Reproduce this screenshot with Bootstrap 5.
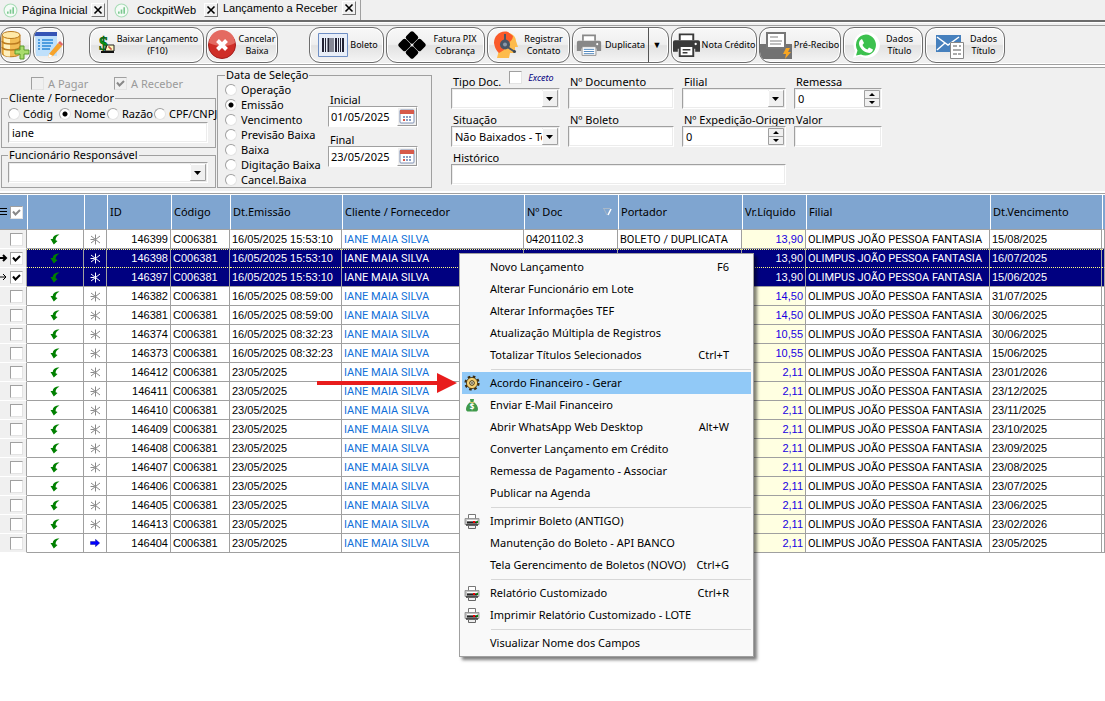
<!DOCTYPE html>
<html lang="pt-BR">
<head>
<meta charset="utf-8">
<meta name="viewport" content="width=device-width, initial-scale=1">
<title>Lançamento a Receber</title>
<link href="https://cdn.jsdelivr.net/npm/bootstrap@5.3.0/dist/css/bootstrap.min.css" rel="stylesheet">
<style>
:root{--ui:"Noto Sans","Open Sans",sans-serif;--doc:"Liberation Sans",Arial,sans-serif;--face:#f0f0f0;--edge:#a0a0a0}
body{font:11px/14px var(--ui);color:#000;background:#fff;min-height:100vh;overflow:hidden}
svg{display:block;flex:none}
/* tabs */
.tabs{height:20px;background:var(--face);font:11px/14px var(--doc)}
.tab-item{height:20px;border-right:1px solid var(--edge);padding:0 2px 0 3px}
.tab-item a{color:#000;text-decoration:none;white-space:nowrap}
.tab-item.first{width:108px}.tab-item.second{width:110px;padding:0 3px 0 6px;border-right-color:#fff}
.tab-item.current{width:143px;padding:0 4px 4px 5px}
.shut{width:14px;height:14px;padding:0;background:var(--face);border:1px solid;border-color:#fff #777 #777 #fff}
/* toolbar */
.tools{background:var(--face);border-top:2px solid #6c6c6c;padding:3px 0;box-shadow:inset 0 1px #fff}
.tools-in{border-top:1px solid var(--edge);border-bottom:1px solid #fff;padding:1px 0 0;gap:2px}
.tool{height:36px;padding:0 3px;border:1px solid #6d6d6d;border-radius:11px;font:9px/12px var(--ui);color:#000;background:linear-gradient(#f8f8f8,#efefef 48%,#e2e2e2 52%,#f4f4f4);box-shadow:inset 0 0 0 1px #fff;overflow:hidden;flex:none}
.tool span{flex:1;text-align:center}
.w31{width:31px}.w72{width:72px}.w75{width:75px}.w80{width:80px}.w82{width:82px}.w83{width:83px}.w86{width:86px}.w97{width:97px}.w99{width:99px}.w115{width:115px}
.gap-a{margin-left:23px}.gap-b{margin-left:29px}
.tool .drop{align-self:stretch;border-left:1px solid #555;flex:none;width:20px;line-height:34px;padding-right:3px}
/* filters */
.filters{background:var(--face);border-top:1px solid var(--edge);border-bottom:1px solid #fff;height:125px;box-shadow:0 -2px #fff,0 -3px var(--edge)}
.frame{border:1px solid var(--edge);margin:0;padding:0}
.frame legend{float:none;width:auto;font:11px/14px var(--ui);margin:0 0 0 7px;padding:0 1px}
.side{width:216px;padding-left:1px}.side .frame{padding:0 7px 0 6px}
.field,.combo,.spin{height:21px;width:100%;border:1px solid;border-color:var(--edge) #fff #fff var(--edge);border-radius:0;background-color:#fff;font:11px/14px var(--ui);color:#000;padding:0 3px;outline:0;box-shadow:inset 0 0 0 1px #ececec;appearance:none;-moz-appearance:textfield}
.spin::-webkit-inner-spin-button{display:none}
.combo{padding-right:17px;background:#fff url("data:image/svg+xml,%3Csvg xmlns='http://www.w3.org/2000/svg' width='16' height='17'%3E%3Cpath fill='%23f0f0f0' stroke='%23a0a0a0' d='M.5.5h15v16H.5z'/%3E%3Cpath stroke='%23fff' fill='none' d='M.5 16V.5H15'/%3E%3Cpath d='M4 7h7L7.500 11z'/%3E%3C/svg%3E") right 1px center no-repeat}
.spin{background:#fff url("data:image/svg+xml,%3Csvg xmlns='http://www.w3.org/2000/svg' width='16' height='17'%3E%3Cpath fill='%23f0f0f0' stroke='%23a0a0a0' d='M.5.500h15v16H.5z'/%3E%3Cpath stroke='%23a0a0a0' d='M0 8.500h16'/%3E%3Cpath d='M5 6h6L8 3zM5 11h6l-3 3z'/%3E%3C/svg%3E") right 1px center no-repeat}
.tick{appearance:none;width:13px;height:13px;margin:0;flex:none;background:#fff;border:1px solid;border-color:var(--edge) #e3e3e3 #e3e3e3 var(--edge)}
.tick:checked{background:#fff url("data:image/svg+xml,%3Csvg xmlns='http://www.w3.org/2000/svg' width='11' height='11'%3E%3Cpath fill='none' stroke='%23000' stroke-width='2' d='M2 4.500l2.500 3L9 3'/%3E%3C/svg%3E") center no-repeat}
.tick.dim,.tick.dim:checked{background-color:var(--face)}
.tick.pale:checked{background-image:url("data:image/svg+xml,%3Csvg xmlns='http://www.w3.org/2000/svg' width='11' height='11'%3E%3Cpath fill='none' stroke='%23888' stroke-width='2' d='M2 4.500l2.500 3L9 3'/%3E%3C/svg%3E")}
.dot{appearance:none;width:12px;height:12px;margin:0;flex:none;border-radius:50%;background:#fff;border:1px solid;border-color:var(--edge) #e3e3e3 #e3e3e3 var(--edge)}
.dot:checked{background:radial-gradient(circle,#000 2px,#fff 3px)}
.pick{height:15px;display:flex;align-items:center;gap:4px;white-space:nowrap}
.status-row{padding:8px 0 0 30px;height:23px;color:#9a9a9a}
.status-row label:first-child{width:83px}
.by{display:grid;grid-template-columns:51px 48px 47px 1fr;height:17px;margin-right:-7px}
.by .pick{height:17px;gap:3px}
.dates{width:215px;height:120px;margin:0 18px 0 1px!important}
.kinds{width:102px;padding-left:7px}
.range{width:90px;padding-top:11px}
.range label,.crit label{display:block;height:13px;line-height:13px;white-space:nowrap;padding-left:2px}
.withcal{display:flex;height:21px;margin-bottom:6px;background:#fff;border:1px solid;border-color:var(--edge) #fff #fff var(--edge)}
.withcal input{flex:1;min-width:0;border:0;outline:0;padding:0 2px;font:11px/14px var(--ui)}
.withcal button{width:20px;padding:1px;background:var(--face);border:1px solid;border-color:#fff #999 #999 #fff}
.crit{display:grid;grid-template-columns:109px 106px 104px 88px;column-gap:8px;row-gap:4px;grid-auto-rows:34px;padding:7px 0 0 1px}
.crit .wide{grid-column:span 3}
.crit .opt{font-size:9px;font-style:italic;color:#000080}
.kind-head{height:13px}.kind-head label:not(:first-child),.kind-head input{margin-bottom:4px}
/* grid */
.sheet{border-top:1px solid var(--edge);padding-top:1px;margin-top:1px;flex:1}
.ledger{table-layout:fixed;width:100%;border-collapse:separate;border-spacing:0;font:11px/14px var(--doc);margin:0}
.ledger th{height:35px;background:#7fa5d0;border-left:1px solid #fff;border-bottom:1px solid var(--edge);font:11px/14px var(--ui);padding:0 2px;white-space:nowrap}
.ledger th:first-child{border-left:0;padding:0}
.ledger td{height:19px;padding:0 2px;border-right:1px solid var(--edge);border-bottom:1px solid var(--edge);white-space:nowrap;overflow:hidden}
.ledger td:first-child{background:var(--face);padding:0;border-bottom-color:#fff}
.ledger td.nm{font-family:Roboto,sans-serif;padding-top:2px}
.ledger .who{color:#1070d8}
.ledger .cash{background:#ffffe1;color:#1800e0;text-align:right}
.ledger .picked td:not(:first-child){background-color:#000080;color:#fff}
.ledger .cursor td:not(:first-child){border-bottom:1px dotted #ffff80;background-image:repeating-linear-gradient(90deg,#ffff80 0 1px,transparent 1px 2px);background-size:100% 1px;background-repeat:no-repeat}
.ledger td svg{margin:0 auto}
.lead-cell{display:flex;align-items:center;height:18px}
.lead-cell i{width:10px}
.lead-cell i svg{margin:0}
/* context menu */
.ctx{left:459px;top:59px;width:295px;min-width:0;padding:2px;border:1px solid #a0a0a0;border-radius:0;background:#f9f9f9;box-shadow:3px 3px 3px rgba(0,0,0,.5);font:11px/14px var(--ui);z-index:5}
.ctx .dropdown-item{height:22px;padding:0 22px 0 2px;color:#000;display:flex;align-items:center}
.ctx .dropdown-item.active{background:#91c9f7}
.ctx .ico{width:26px;flex:none}
.ctx .dropdown-divider{margin:3px 0 2px 29px;border-color:#d7d7d7;opacity:1}
.pointer{left:317px;top:179px;z-index:6}
</style>
</head>
<body class="d-flex flex-column">
<svg width="0" height="0" class="position-absolute" aria-hidden="true">
<symbol id="logo" viewBox="0 0 14 14"><circle cx="7" cy="7" r="6" fill="#f4fbf6" stroke="#a8dcb6"/><path d="M4.500 10V8M7 10V6M9.500 10V4" stroke="#7cc890" stroke-width="1.500"/></symbol>
<symbol id="x" viewBox="0 0 12 12"><path d="M2.500 2.500l7 7M9.500 2.500l-7 7" stroke="#000" stroke-width="1.600"/></symbol>
<symbol id="hook" viewBox="0 0 10 11"><path d="M9.500.5C5 .5 2.800 2.500 2.800 5H.5L3.800 10.500 7.500 7 5.600 6.200C5.600 4 6.500 2 9.500.5z" fill="#008000"/></symbol>
<symbol id="star" viewBox="0 0 11 11"><path d="M5.500.5v10M1 2l9 7M10 2L1 9M.5 5.500h4" stroke="currentColor" fill="none"/></symbol>
<symbol id="go" viewBox="0 0 10 8"><path d="M.5 2.500h5V.3L9.700 4 5.500 7.700V5.500h-5z" fill="#00f" stroke="#007" stroke-width=".4"/></symbol>
<symbol id="cal" viewBox="0 0 16 15"><rect x="1" y="1" width="14" height="13" rx="1" fill="#fff" stroke="#7e91b5"/><path d="M1 1h14v4H1z" fill="#d75a4a"/><path d="M4 8h2M7 8h2M10 8h2M7 11h2M10 11h2" stroke="#8a9fc4" stroke-width="2"/><path d="M4 11h2" stroke="#d9574a" stroke-width="2"/></symbol>
<symbol id="prn" viewBox="0 0 16 15"><path d="M4.500.5h7v5h-7z" fill="#fff" stroke="#777"/><path d="M1 4.500h14v6H1z" fill="#c4c4c4" stroke="#888" stroke-width=".8"/><path d="M3 6.500h10" stroke="#fff"/><path d="M3 8.500h10" stroke="#222" stroke-width="2"/><path d="M9 8h2" stroke="#e00" stroke-width="2"/><path d="M12.500 8H14" stroke="#080" stroke-width="2"/><path d="M2 11h12" stroke="#333" stroke-width="1.500"/><path d="M4.500 11.500h7v3h-7z" fill="#eee" stroke="#666"/></symbol>
<symbol id="big-prn" viewBox="0 0 30 26"><path d="M8 8V2h14v6" fill="#fff" stroke="currentColor" stroke-width="2"/><path d="M3 8h24a2 2 0 0 1 2 2v10h-5v-3H6v3H1V10a2 2 0 0 1 2-2z" fill="currentColor"/><circle cx="24.500" cy="12" r="1.200" fill="#fff"/></symbol>
</svg>

<nav class="tabs d-flex" aria-label="Abas">
 <div class="tab-item first d-flex align-items-center gap-1"><svg width="15" height="15"><use href="#logo"/></svg><a href="#">Página Inicial</a><button class="shut ms-auto" aria-label="Fechar"><svg width="12" height="12"><use href="#x"/></svg></button></div>
 <div class="tab-item second d-flex align-items-center gap-2"><svg width="15" height="15"><use href="#logo"/></svg><a href="#">CockpitWeb</a><button class="shut ms-auto" aria-label="Fechar"><svg width="12" height="12"><use href="#x"/></svg></button></div>
 <div class="tab-item current d-flex align-items-center"><a href="#">Lançamento a Receber</a><button class="shut ms-auto" aria-label="Fechar"><svg width="12" height="12"><use href="#x"/></svg></button></div>
</nav>

<div class="tools"><div class="tools-in d-flex">
 <button class="tool w31 p-0 d-flex align-items-center" aria-label="Incluir"><svg width="29" height="30" viewBox="0 0 29 30"><path d="M1 5v18c0 5 18 5 18 0V5" fill="#f2bd55" stroke="#ba7b20"/><path d="M3 8v17c3 2 6 1.500 6 1.500V9z" fill="#fff0bd"/><ellipse cx="10" cy="5" rx="9" ry="3.500" fill="#ffe9a8" stroke="#ba7b20"/><path d="M1 11c1 4 17 4 18 0M1 17c1 4 17 4 18 0" fill="none" stroke="#ba7b20" stroke-width="1.500"/><path d="M19 16h4v4h5v4h-5v5h-4v-5h-5v-4h5z" fill="#a9dc6c" stroke="#5b9b2c"/></svg></button>
 <button class="tool w31 p-0 d-flex align-items-center" aria-label="Editar"><svg width="29" height="30" viewBox="0 0 29 30"><path d="M1 2h22v24H2z" fill="#bfe0fb"/><path d="M0 2h23v4H0z" fill="#3554b5"/><path d="M4 10h2M4 13h2M4 16h2M4 19h2M8 10h11M8 13h11M8 16h9M8 19h8" stroke="#2b86d6" stroke-width="1.500"/><path d="M15 24L24 13l4 3-9 10-5 2z" fill="#f6a32c"/><path d="M24 13l2-2 3 3-1 2z" fill="#e06666"/><path d="M15 24l-1 4 5-2z" fill="#fff"/></svg></button>
 <button class="tool w115 gap-a d-flex align-items-center ps-2"><svg width="17" height="22" viewBox="0 0 17 22"><text x="1" y="16" font-family="Liberation Serif" font-weight="bold" font-size="18" fill="#069a16" stroke="#044c08" stroke-width=".6">$</text><path d="M9 11h7v6H7z" fill="#fff8bd" stroke="#222"/><path d="M10 13h2v2h2" stroke="#b02020" fill="none"/><path d="M3 18h13" stroke="#111" stroke-width="2"/></svg><span>Baixar Lançamento<br>(F10)</span></button>
 <button class="tool w72 ps-0 pe-0 d-flex align-items-center"><svg width="30" height="30" viewBox="0 0 30 30"><circle cx="15" cy="15" r="13.500" fill="#cf2e27" stroke="#a21d1b"/><path d="M2 13a13 13 0 0 1 26 0c-6 4-18 4-26 0z" fill="#e46a61"/><path d="M10.500 10.500l9 9M19.500 10.500l-9 9" stroke="#fff" stroke-width="4"/></svg><span>Cancelar<br>Baixa</span></button>
 <button class="tool w75 gap-b d-flex align-items-center ps-2"><svg width="30" height="24" viewBox="0 0 30 24"><path d="M.5.5h29v23H.5z" fill="#e8eef8" stroke="#6f8fc4"/><path d="M5 5v14M10.500 5v14M18 5v14M25 5v14" stroke="#223" stroke-width="2"/><path d="M7.500 5v14M13 5v14M15 5v14M20.500 5v14M22.500 5v14" stroke="#223"/></svg><span>Boleto</span></button>
 <button class="tool w99 d-flex align-items-center ps-2"><svg width="34" height="30" viewBox="0 0 34 30"><g transform="translate(17 15) rotate(45)"><rect x="-10.300" y="-10.300" width="10" height="10" rx="2"/><rect x=".3" y="-10.300" width="10" height="10" rx="2"/><rect x="-10.300" y=".3" width="10" height="10" rx="2"/><rect x=".3" y=".3" width="10" height="10" rx="2"/></g></svg><span>Fatura PIX<br>Cobrança</span></button>
 <button class="tool w83 d-flex align-items-center"><svg width="30" height="28" viewBox="0 0 30 28"><path d="M12 1c9 0 13 5 13 9l2 6h-3v6h-5l-1 5H6l3-12z" fill="#fdbb4b"/><path d="M17 1C9-1 3 5 3 12c1 6 3 8 5 10l5-3c0-5 9-8 9-14z" fill="#fa5a2a"/><path d="M14 3v10M15 15l9 6" stroke="#4a5665" stroke-width="2" fill="none"/><circle cx="14" cy="13.500" r="5" fill="#4a5665"/><circle cx="14" cy="13.500" r="2" fill="#8a98a8"/><circle cx="23.500" cy="20.500" r="1.500" fill="#394450"/></svg><span>Registrar<br>Contato</span></button>
 <button class="tool w97 pe-0 d-flex align-items-center"><svg width="26" height="26" viewBox="0 0 30 26" color="#888"><use href="#big-prn" width="30" height="26"/><path d="M7 15h16v10H7z" fill="#fff" stroke="#888"/><path d="M9 18h12M9 20.500h12M9 23h12" stroke="#3a78b5"/></svg><span>Duplicata</span><span class="drop">▼</span></button>
 <button class="tool w86 ps-0 pe-0 d-flex align-items-center"><svg width="29" height="26" viewBox="0 0 30 26" color="#3a3a3a"><use href="#big-prn" width="30" height="26"/><path d="M8 14h14v10.500H8z" fill="#fff" stroke="#3a3a3a" stroke-width="2"/><path d="M11 18h8M11 21h5" stroke="#3a3a3a" stroke-width="1.500"/></svg><span>Nota Crédito</span></button>
 <button class="tool w82 ps-0 pe-0 d-flex align-items-center"><svg width="33" height="29" viewBox="0 0 33 29"><path d="M0 13h32v15H0z" fill="#727272"/><path d="M7 2h18v15H7z" fill="#fff" stroke="#777" stroke-width="2"/><path d="M10 6h8M10 10h12M10 13h11" stroke="#aaa" stroke-width="1.500"/><path d="M26 17h4l-2 4h3l-6 7 1-5h-3z" fill="#f7a521"/></svg><span>Pré-Recibo</span></button>
 <button class="tool w80 d-flex align-items-center ps-2"><svg width="28" height="28" viewBox="0 0 28 28"><path d="M14 1a13 13 0 1 1-6 24L1 27l2-7A13 13 0 0 1 14 1z" fill="#fff"/><path d="M14 3.500a10.500 10.500 0 1 1-5 20L4 24.500l1.500-5A10.500 10.500 0 0 1 14 3.500z" fill="#3cc14e"/><path d="M10 8l2 4-1.500 2c1 2 2.500 3.500 5 4.500l1.500-2 4 2c-.5 3-3 4-6 3-4-1-8-5.500-8-9 0-2 1-4 3-4.500z" fill="#fff"/></svg><span>Dados<br>Título</span></button>
 <button class="tool w80 d-flex align-items-center ps-2"><svg width="32" height="28" viewBox="0 0 32 28"><path d="M2 4h25v17H2z" fill="#4680bd"/><path d="M3 6l11 8 11-8M3 19l8-7M25 19l-8-7" fill="none" stroke="#fff" stroke-width="1.500"/><path d="M16.500 11.500h13v16h-13z" fill="#fff" stroke="#888"/><path d="M19 15h4M25 15h2M19 19h8M19 23h4M24 23h3" stroke="#aaa" stroke-width="2"/></svg><span>Dados<br>Título</span></button>
</div></div>

<form class="filters d-flex" onsubmit="return false">
 <div class="side">
  <div class="status-row d-flex"><label class="d-flex gap-1 align-items-center"><input class="tick dim" type="checkbox" disabled> A Pagar</label><label class="d-flex gap-1 align-items-center"><input class="tick dim pale" type="checkbox" checked disabled> A Receber</label></div>
  <fieldset class="frame"><legend class="ms-0">Cliente / Fornecedor</legend>
   <div class="by"><label class="pick"><input class="dot" type="radio" name="by">Códig</label><label class="pick"><input class="dot" type="radio" name="by" checked>Nome</label><label class="pick"><input class="dot" type="radio" name="by">Razão</label><label class="pick"><input class="dot" type="radio" name="by">CPF/CNPJ</label></div>
   <input class="field mb-1" aria-label="Cliente" value="iane"></fieldset>
  <fieldset class="frame"><legend class="ms-0">Funcionário Responsável</legend><select class="combo mb-1" aria-label="Funcionário Responsável"><option></option></select></fieldset>
 </div>
 <fieldset class="frame dates"><legend>Data de Seleção</legend>
  <div class="d-flex gap-2"><div class="kinds">
   <label class="pick"><input class="dot" type="radio" name="dt">Operação</label><label class="pick"><input class="dot" type="radio" name="dt" checked>Emissão</label><label class="pick"><input class="dot" type="radio" name="dt">Vencimento</label><label class="pick"><input class="dot" type="radio" name="dt">Previsão Baixa</label><label class="pick"><input class="dot" type="radio" name="dt">Baixa</label><label class="pick"><input class="dot" type="radio" name="dt">Digitação Baixa</label><label class="pick"><input class="dot" type="radio" name="dt">Cancel.Baixa</label></div>
   <div class="range"><label for="d1">Inicial</label><div class="withcal"><input id="d1" value="01/05/2025"><button aria-label="Calendário"><svg width="16" height="15"><use href="#cal"/></svg></button></div><label for="d2">Final</label><div class="withcal"><input id="d2" value="23/05/2025"><button aria-label="Calendário"><svg width="16" height="15"><use href="#cal"/></svg></button></div></div>
  </div></fieldset>
 <div class="crit">
  <div><div class="kind-head d-flex align-items-end"><label for="c1">Tipo Doc.</label><input class="tick ms-2" type="checkbox" id="ex"><label class="opt ms-1" for="ex">Exceto</label></div><select class="combo" id="c1"><option></option></select></div>
  <div><label for="c2">Nº Documento</label><input class="field" id="c2"></div>
  <div><label for="c3">Filial</label><select class="combo" id="c3"><option></option></select></div>
  <div><label for="c4">Remessa</label><input class="spin" type="number" id="c4" value="0"></div>
  <div><label for="c5">Situação</label><select class="combo" id="c5"><option>Não Baixados - Todos</option></select></div>
  <div><label for="c6">Nº Boleto</label><input class="field" id="c6"></div>
  <div><label for="c7">Nº Expedição-Origem</label><input class="spin" type="number" id="c7" value="0"></div>
  <div><label for="c8">Valor</label><input class="field" id="c8"></div>
  <div class="wide"><label for="c9">Histórico</label><input class="field" id="c9"></div>
 </div>
</form>

<main class="sheet position-relative">
 <table class="ledger">
  <colgroup><col style="width:27px"><col style="width:57px"><col style="width:23px"><col style="width:64px"><col style="width:59px"><col style="width:112px"><col style="width:182px"><col style="width:94px"><col style="width:124px"><col style="width:64px"><col style="width:184px"><col style="width:112px"><col></colgroup>
  <thead><tr><th><div class="lead-cell"><i><svg width="8" height="10"><path d="M0 1.500h7M0 4.500h7M0 7.500h7" stroke="#000"/></svg></i><input class="tick pale" type="checkbox" checked aria-label="Todos"></div></th><th></th><th></th><th>ID</th><th>Código</th><th>Dt.Emissão</th><th>Cliente / Fornecedor</th><th><div class="d-flex justify-content-between align-items-center pe-1">Nº Doc<svg width="9" height="8"><path d="M0 .5h7M1 1l3 6" stroke="#a8b8c8" fill="none"/><path d="M8 1L5 7" stroke="#fff" stroke-width="1.500"/></svg></div></th><th>Portador</th><th>Vr.Líquido</th><th>Filial</th><th>Dt.Vencimento</th><th></th></tr></thead>
  <tbody id="rows"></tbody>
 </table>

 <div class="ctx dropdown-menu show position-absolute" id="menu"></div>
 <svg class="pointer position-absolute" width="141" height="20" viewBox="0 0 141 20"><path d="M0 8h120V0l20 10-20 10v-8H0z" fill="#e81c1c"/></svg>
</main>

<script src="https://cdn.jsdelivr.net/npm/bootstrap@5.3.0/dist/js/bootstrap.bundle.min.js"></script>
<script>
const titles = [
 [146399,'16/05/2025 15:53:10','13,90','15/08/2025'],[146398,'16/05/2025 15:53:10','13,90','16/07/2025'],
 [146397,'16/05/2025 15:53:10','13,90','15/06/2025'],[146382,'16/05/2025 08:59:00','14,50','31/07/2025'],
 [146381,'16/05/2025 08:59:00','14,50','30/06/2025'],[146374,'16/05/2025 08:32:23','10,55','30/06/2025'],
 [146373,'16/05/2025 08:32:23','10,55','15/06/2025'],[146412,'23/05/2025','2,11','23/01/2026'],
 [146411,'23/05/2025','2,11','23/12/2025'],[146410,'23/05/2025','2,11','23/11/2025'],
 [146409,'23/05/2025','2,11','23/10/2025'],[146408,'23/05/2025','2,11','23/09/2025'],
 [146407,'23/05/2025','2,11','23/08/2025'],[146406,'23/05/2025','2,11','23/07/2025'],
 [146405,'23/05/2025','2,11','23/06/2025'],[146413,'23/05/2025','2,11','23/02/2026'],
 [146404,'23/05/2025','2,11','23/05/2025']];
document.getElementById('rows').innerHTML = titles.map(([id, issued, value, due], n) => {
  const on = n === 1 || n === 2;
  const mark = on ? `<svg width="8" height="8"><path d="M0 4h6M3 1l3 3-3 3" fill="none" stroke="#000" stroke-width="${n === 1 ? 2 : 1}"/></svg>` : '';
  const state = n === titles.length - 1 ? '<svg width="10" height="8"><use href="#go"/></svg>' : `<svg width="11" height="11" color="${on ? '#fff' : '#888'}"><use href="#star"/></svg>`;
  return `<tr class="${on ? 'picked' : ''} ${n === 1 ? 'cursor' : ''}"><td><div class="lead-cell"><i>${mark}</i><input class="tick" type="checkbox" aria-label="${id}" ${on ? 'checked' : ''}></div></td>
  <td><svg width="10" height="11"><use href="#hook"/></svg></td><td>${state}</td><td class="text-end">${id}</td><td>C006381</td><td>${issued}</td><td class="nm who">IANE MAIA SILVA</td>
  <td>${n === 0 ? '04201102.3' : ''}</td><td class="nm">${n === 0 ? 'BOLETO / DUPLICATA' : ''}</td><td class="cash">${value}</td><td class="nm">OLIMPUS JOÃO PESSOA FANTASIA</td><td>${due}</td><td></td></tr>`;
}).join('');

const gear = '<svg width="16" height="16" viewBox="0 0 16 16"><circle cx="8" cy="8" r="6.300" fill="none" stroke="#3b2c10" stroke-width="2.600" stroke-dasharray="2.500 2.450"/><circle cx="8" cy="8" r="5.600" fill="#f5cf70" stroke="#3b2c10" stroke-width=".8"/><circle cx="8" cy="8" r="2.300" fill="#fff3c8" stroke="#3b2c10"/><circle cx="8" cy="8" r=".8"/></svg>';
const bag = '<svg width="16" height="14" viewBox="0 0 16 14"><path d="M6 1h4L9.500 4c3 1.500 4.500 5 4.500 7s-1 2.500-2.500 2.500h-7C3 13.500 2 13 2 11s1.500-5.500 4.500-7z" fill="#3f9a4b"/><path d="M5.500 4.500h5" stroke="#d8c46a"/><text x="8" y="12" text-anchor="middle" font-size="8" font-weight="bold" fill="#fff">$</text></svg>';
const printer = '<svg width="16" height="15"><use href="#prn"/></svg>';
const items = [['Novo Lançamento','F6'],['Alterar Funcionário em Lote'],['Alterar Informações TEF'],['Atualização Múltipla de Registros'],['Totalizar Títulos Selecionados','Ctrl+T'],null,
 ['Acordo Financeiro - Gerar','',gear,true],['Enviar E-Mail Financeiro','',bag],['Abrir WhatsApp Web Desktop','Alt+W'],['Converter Lançamento em Crédito'],['Remessa de Pagamento - Associar'],['Publicar na Agenda'],null,
 ['Imprimir Boleto (ANTIGO)','',printer],['Manutenção do Boleto - API BANCO'],['Tela Gerencimento de Boletos (NOVO)','Ctrl+G'],null,
 ['Relatório Customizado','Ctrl+R',printer],['Imprimir Relatório Customizado - LOTE','',printer],null,['Visualizar Nome dos Campos']];
document.getElementById('menu').innerHTML = items.map(it => it
  ? `<a href="#" class="dropdown-item ${it[3] ? 'active' : ''}"><span class="ico">${it[2] || ''}</span><span>${it[0]}</span><span class="ms-auto">${it[1] || ''}</span></a>`
  : '<hr class="dropdown-divider">').join('');
</script>
</body>
</html>
